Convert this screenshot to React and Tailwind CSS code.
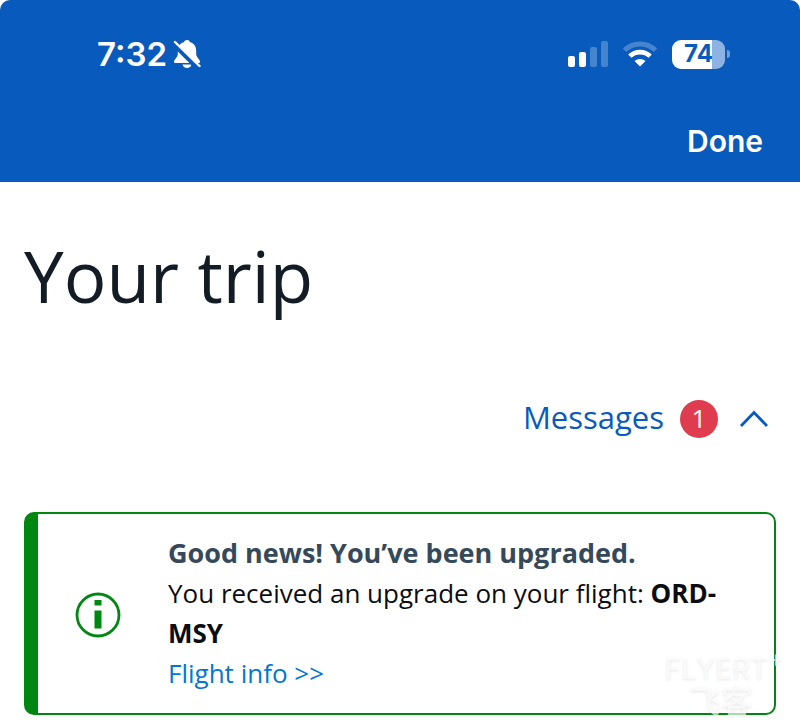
function BellOff() {
  return (
    <svg className="h-8 w-7" viewBox="0 0 28 32" role="img" aria-label="Silent mode">
      <g fill="#fff">
        <path d="M14 2c-1.8 0-2.8 1-3.2 2.300C6.500 5.600 4.800 9 4.800 13v3.500c0 2-2.800 4.500-3.600 6.200-.7 1.500.2 2.300 1.500 2.300h22.600c1.300 0 2.200-.8 1.500-2.300-.8-1.700-3.600-4.200-3.600-6.200V13c0-4-1.700-7.400-6-8.700C16.800 3 15.800 2 14 2Z" />
        <path d="M9.500 26.500h9c-.5 2-2.200 3.500-4.500 3.500s-4-1.500-4.500-3.500Z" />
      </g>
      <path d="M.5 6 24.500 30" stroke="#085bbd" strokeWidth="4.500" />
      <path d="M2 4 26.500 28" stroke="#fff" strokeWidth="2.400" strokeLinecap="round" />
    </svg>
  );
}

function Signal() {
  return (
    <svg className="h-8 w-11" viewBox="0 0 44 32" role="img" aria-label="Signal strength 2 of 4" fill="#fff">
      <rect x="2" y="18" width="7" height="11" rx="2" />
      <rect x="13" y="14" width="7" height="15" rx="2" />
      <rect x="24" y="9" width="7" height="20" rx="2" opacity=".25" />
      <rect x="35" y="3" width="7" height="26" rx="2" opacity=".25" />
    </svg>
  );
}

function Wifi() {
  return (
    <svg className="h-8 w-9" viewBox="0 0 36 32" role="img" aria-label="Wi-Fi">
      <path d="M2.500 12.300a22 22 0 0 1 31 0" fill="none" stroke="#fff" strokeOpacity=".25" strokeWidth="5" />
      <path d="M7.800 18.200a14.700 14.700 0 0 1 20.400 0" fill="none" stroke="#fff" strokeWidth="4.600" />
      <path d="m18 28.600-5.500-5.500a8 8 0 0 1 11 0Z" fill="#fff" />
    </svg>
  );
}

function Battery() {
  return (
    <div className="flex items-center gap-0.5" role="img" aria-label="Battery 74 percent">
      <div className="flex h-[29px] w-[53px] items-center justify-center rounded-[9px] bg-linear-to-r from-white from-75% to-[#8eb3e3] to-75% font-[Inter,sans-serif] text-2xl leading-none font-bold text-[#085bbd]">
        74
      </div>
      <div className="h-2 w-[3px] rounded-r-full bg-[#6f9fd9]" />
    </div>
  );
}

function InfoIcon() {
  return (
    <svg className="h-12 w-12" viewBox="0 0 48 48" aria-hidden="true">
      <circle cx="24" cy="24" r="21" fill="none" stroke="#008712" strokeWidth="2.800" />
      <path fill="#008712" d="M20.500 9h7v5.500h-7zM20.500 19.500h7v18h-7z" />
    </svg>
  );
}

export default function App() {
  return (
    <div className="relative bg-white font-['Open_Sans',sans-serif] text-[#131c25]">
      <header className="rounded-t-[10px] bg-[#085bbd] pt-[38px] pb-[21px] text-white">
        <div className="flex items-center justify-between pr-[70px] pl-[97px]">
          <div className="flex items-center gap-1.5 font-[Inter,sans-serif]">
            <span className="text-[33px] leading-8 font-semibold">7:32</span>
            <BellOff />
          </div>
          <div className="flex items-center gap-3.5">
            <div className="flex items-center gap-3">
              <Signal />
              <Wifi />
            </div>
            <Battery />
          </div>
        </div>
        <div className="mt-[51px] flex justify-end px-[37px]">
          <button type="button" className="font-[Inter,sans-serif] text-[30px] leading-10 font-semibold">
            Done
          </button>
        </div>
      </header>

      <main className="px-6 pt-[46px] pb-3">
        <h1 className="text-[71px] leading-[96px]">Your trip</h1>

        <div className="mt-[69px] flex justify-end pr-1.5">
          <button type="button" aria-expanded="true" className="flex items-center gap-4 text-[#085bbd]">
            <span className="text-[31px] leading-[48px]">Messages</span>
            <span className="mt-1 flex size-[38px] items-center justify-center rounded-full bg-[#e03c50] pb-0.5 text-[26px] leading-none text-white">
              1
            </span>
            <svg className="mt-1 ml-1 h-5 w-8" viewBox="0 0 32 20" aria-hidden="true">
              <path d="m3 17 13-13.500L29 17" fill="none" stroke="#085bbd" strokeWidth="2.800" />
            </svg>
          </button>
        </div>

        <section className="mt-[71px] flex items-center rounded-[10px] border-2 border-l-[14px] border-[#008712] pt-[19px] pb-5 leading-10">
          <div className="flex w-[130px] shrink-0 pt-1 pl-9">
            <InfoIcon />
          </div>
          <div className="pr-6 text-[26px] leading-10">
            <h2 className="text-[27px] leading-10 font-bold text-[#36495a]">Good news! You’ve been upgraded.</h2>
            <p className="text-[#0b0d12]">
              You received an upgrade on your flight: <b className="font-bold">ORD-MSY</b>
            </p>
            <a href="#flight-info" className="block text-[#0078d2]">
              Flight info &gt;&gt;
            </a>
          </div>
        </section>
      </main>

      <div className="pointer-events-none absolute right-4 bottom-3 flex flex-col text-white/70 [text-shadow:0_1px_3px_rgb(0_0_0/0.1)]">
        <div className="flex font-[Inter,sans-serif] text-[28px] leading-7">
          <span>FLYERT</span>
          <span className="-mt-2 text-2xl leading-6">+</span>
        </div>
        <div className="pl-6 font-['Noto_Sans_CJK_SC',sans-serif] text-[32px] leading-8 font-medium">飞客</div>
      </div>
    </div>
  );
}
